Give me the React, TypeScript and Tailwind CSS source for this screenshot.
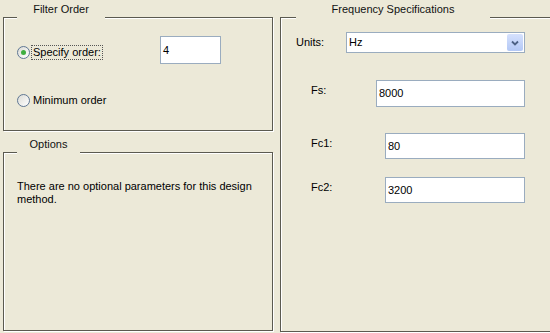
import React from 'react';

const font = { fontFamily: '"Liberation Sans", Arial, sans-serif' };

function GroupBox({
  title,
  gap,
  className,
  children,
}: {
  title: string;
  gap: string;
  className: string;
  children?: React.ReactNode;
}) {
  return (
    <div className={`relative border border-[#5b5a50] shadow-[1px_1px_0_#ffffff,inset_1px_1px_0_#ffffff] ${className}`}>
      {/* title sits over the top edge */}
      <div className={`absolute -top-[18px] h-[20px] bg-[#ece9d8] text-center text-[11px] leading-[18px] text-[#111] ${gap}`}>
        {title}
      </div>
      {children}
    </div>
  );
}

function Radio({ checked, label, focused }: { checked?: boolean; label: string; focused?: boolean }) {
  return (
    <div className="flex items-center">
      <span className="flex h-[13px] w-[13px] items-center justify-center rounded-full border border-[#5f7794] bg-gradient-to-br from-[#dcdcd6] to-white">
        {checked && <span className="h-[5px] w-[5px] rounded-full bg-[#3fae3f]" />}
      </span>
      <span
        className={`ml-[2px] px-[1px] text-[11px] leading-[13px] text-black ${
          focused ? 'outline outline-1 outline-dotted outline-[#555]' : ''
        }`}
      >
        {label}
      </span>
    </div>
  );
}

function TextBox({ value, className }: { value: string; className: string }) {
  return (
    <div className={`flex items-center border border-[#9aacbf] bg-white pl-[2px] text-[11px] text-black ${className}`}>
      {value}
    </div>
  );
}

export default function App() {
  return (
    <div className="flex h-[333px] w-[550px] overflow-hidden bg-[#ece9d8]" style={font}>
      {/* left column */}
      <div className="ml-[3px] flex w-[270px] shrink-0 flex-col pt-[17px]">
        <GroupBox title="Filter Order" gap="left-[13px] w-[88px]" className="h-[114px]">
          <div className="mt-[18px] flex h-[28px] items-center pl-[13px]">
            <div className="mt-[4px] w-[143px]">
              <Radio checked focused label="Specify order:" />
            </div>
            <TextBox value="4" className="h-[28px] w-[61px]" />
          </div>
          <div className="mt-[30px] pl-[13px]">
            <Radio label="Minimum order" />
          </div>
        </GroupBox>

        <GroupBox title="Options" gap="left-[13px] w-[63px]" className="mt-[21px] h-[179px]">
          <p className="mt-[27px] w-[262px] pl-[13px] text-[11px] leading-[13px] text-black">
            There are no optional parameters for this design method.
          </p>
        </GroupBox>
      </div>

      {/* right column */}
      <div className="ml-[7px] w-[290px] shrink-0 pt-[17px]">
        <GroupBox title="Frequency Specifications" gap="left-[15px] w-[194px]" className="h-[315px]">
          <div className="mt-[14px] flex items-center pl-[15px]">
            <span className="w-[50px] text-[11px] text-black">Units:</span>
            <div className="flex h-[21px] w-[179px] items-center border border-[#9aacbf] bg-white text-[11px] text-black">
              <span className="flex-1 pl-[2px]">Hz</span>
              <span className="mr-[1px] flex h-[17px] w-[16px] items-center justify-center rounded-[2px] bg-gradient-to-b from-[#d6e1fd] to-[#b3c8f5]">
                <svg width="8" height="6" viewBox="0 0 8 6">
                  <path d="M1 1.5 L4 4.5 L7 1.5" fill="none" stroke="#4d6185" strokeWidth="1.8" />
                </svg>
              </span>
            </div>
          </div>

          <div className="mt-[27px] flex items-start pl-[30px]">
            <span className="mt-[4px] w-[65px] text-[11px] leading-[13px] text-black">Fs:</span>
            <TextBox value="8000" className="h-[27px] w-[149px]" />
          </div>

          <div className="mt-[26px] flex items-start pl-[30px]">
            <span className="mt-[4px] w-[74px] text-[11px] leading-[13px] text-black">Fc1:</span>
            <TextBox value="80" className="h-[26px] w-[140px]" />
          </div>

          <div className="mt-[18px] flex items-start pl-[30px]">
            <span className="mt-[4px] w-[74px] text-[11px] leading-[13px] text-black">Fc2:</span>
            <TextBox value="3200" className="h-[26px] w-[140px]" />
          </div>
        </GroupBox>
      </div>
    </div>
  );
}
